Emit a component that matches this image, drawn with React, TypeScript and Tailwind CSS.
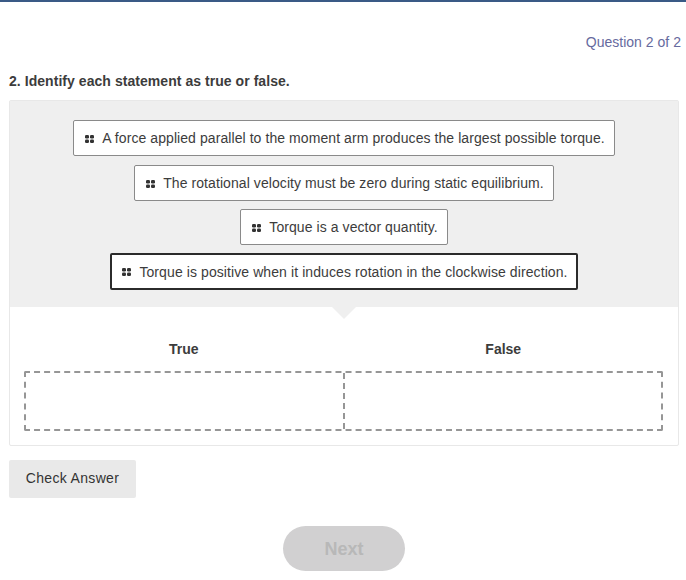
import React from 'react';

const STATEMENTS = [
  { text: 'A force applied parallel to the moment arm produces the largest possible torque.', active: false },
  { text: 'The rotational velocity must be zero during static equilibrium.', active: false },
  { text: 'Torque is a vector quantity.', active: false },
  { text: 'Torque is positive when it induces rotation in the clockwise direction.', active: true },
];

const Grip = () => (
  <svg width="9" height="8" viewBox="0 0 9 8" className="shrink-0 mt-[1px] fill-[#333333]">
    <rect x="0" y="0" width="4" height="3.4" rx="1.2" />
    <rect x="5" y="0" width="4" height="3.4" rx="1.2" />
    <rect x="0" y="4.6" width="4" height="3.4" rx="1.2" />
    <rect x="5" y="4.6" width="4" height="3.4" rx="1.2" />
  </svg>
);

const App: React.FC = () => {
  return (
    <div className="w-[686px] h-[580px] overflow-hidden bg-white font-['Liberation_Sans',Arial,sans-serif] text-[#3c3c3c] border-t-2 border-[#3a5a86]">
      <div className="pt-[32px] pr-[5px] text-right text-sm leading-4 tracking-[0.02px] text-[#666a9e]">Question 2 of 2</div>

      <div className="mt-[23px] ml-[9px] text-sm leading-4 tracking-[0.05px] font-bold">2. Identify each statement as true or false.</div>

      <div className="mt-[11px] ml-[9px] w-[670px] h-[346px] border border-[#e8e8e8] rounded-[2px]">
        <div className="relative h-[206px] bg-[#efefef] pt-[19px] flex flex-col items-center">
          {STATEMENTS.map((s) => (
            <div
              key={s.text}
              className={
                s.active
                  ? 'mt-[8px] h-[37px] flex items-center gap-[8px] pl-[10px] pr-[8px] bg-white rounded-[2px] border-2 border-[#2b2b2b] text-sm tracking-[0.09px] whitespace-nowrap'
                  : 'mt-[8px] first:mt-0 first:mb-[1px] h-[36px] flex items-center gap-[8px] pl-[11px] pr-[9px] bg-white rounded-[2px] border border-[#8a8a8a] text-sm tracking-[0.075px] whitespace-nowrap'
              }
            >
              <Grip />
              <span>{s.text}</span>
            </div>
          ))}
          <div className="absolute left-[322px] top-[206px] w-0 h-0 border-x-[12px] border-x-transparent border-t-[12px] border-t-[#efefef]" />
        </div>

        <div className="pl-[14px] pr-[15px] pt-[34px]">
          <div className="grid grid-cols-2 text-sm leading-4 font-bold text-center">
            <div>True</div>
            <div>False</div>
          </div>
          <div className="mt-[14px] h-[60px] grid grid-cols-[317px_1fr] border-2 border-dashed border-[#969696] rounded-[2px]">
            <div />
            <div className="border-l-2 border-dashed border-[#969696]" />
          </div>
        </div>
      </div>

      <button className="block mt-[14px] ml-[9px] w-[127px] h-[38px] pb-[2px] bg-[#e9e9e9] rounded-[2px] text-sm tracking-[0.33px] text-[#333333]">
        Check Answer
      </button>

      <button className="block mt-[28px] ml-[283px] w-[122px] h-[45px] rounded-full bg-[#d1d0d1] text-lg font-bold text-[#b8b8b8]">
        Next
      </button>
    </div>
  );
};

export default App;
